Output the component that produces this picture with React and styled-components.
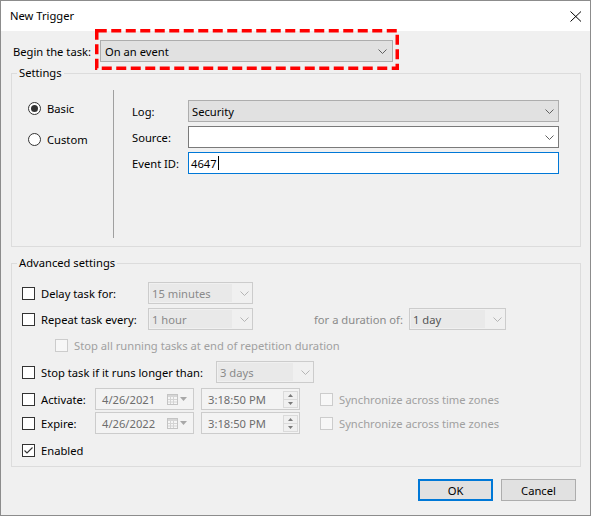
import styled, { createGlobalStyle } from "styled-components";

const GlobalStyle = createGlobalStyle`
  * { box-sizing: border-box; }
  html, body { margin: 0; padding: 0; background: #ffffff; }
  body {
    font-family: "Noto Sans", "Segoe UI", "Open Sans", sans-serif;
    font-size: 11.2px;
    color: #000;
  }
`;

const palette = {
  button: { bg: "#e1e1e1", border: "#adadad" },
  edit: { bg: "#ffffff", border: "#7a7a7a" },
  focus: { bg: "#ffffff", border: "#0078d7" },
  disabled: { bg: "#f0f0f0", border: "#cccccc" },
};

const Window = styled.div`
  width: 591px;
  height: 516px;
  border: 1px solid #8c8c8c;
  background: #f0f0f0;
  display: flex;
  flex-direction: column;
`;

const TitleBar = styled.div`
  height: 30px;
  flex: none;
  background: #fff;
  display: flex;
  align-items: center;
  justify-content: space-between;
  padding: 0 8px 0 9px;
`;

const Title = styled.span`
  line-height: 16px;
`;

const Body = styled.div`
  flex: 1;
  display: flex;
  flex-direction: column;
  padding: 9px 9px 0 10px;
`;

const BeginRow = styled.div`
  display: flex;
  align-items: center;
  height: 22px;
`;

const FieldLabel = styled.span`
  width: ${({ $w }) => $w}px;
  padding-left: ${({ $pl = 0 }) => $pl}px;
  flex: none;
  line-height: 16px;
  padding-top: 1px;
`;

const ComboWrap = styled.div`
  position: relative;
`;

const ComboBox = styled.div`
  width: ${({ $w }) => $w}px;
  height: 22px;
  flex: none;
  display: flex;
  align-items: center;
  background: ${({ $variant }) => palette[$variant].bg};
  border: ${({ $variant }) => ($variant === "focus" ? "1px" : "1px")} solid
    ${({ $variant }) => palette[$variant].border};
  margin-left: ${({ $ml = 0 }) => $ml}px;
`;

const ComboText = styled.span`
  flex: 1;
  align-self: stretch;
  display: flex;
  align-items: center;
  padding-left: ${({ $pl = 3 }) => $pl}px;
  margin: ${({ $disabled }) => ($disabled ? "1px 8px 1px 1px" : "0")};
  background: ${({ $disabled }) => ($disabled ? "#e9e9e9" : "transparent")};
  color: ${({ $disabled, $dark }) =>
    $dark ? "#555" : $disabled ? "#8a8a8a" : "#000"};
  white-space: nowrap;
`;

const Caret = styled.span`
  display: inline-block;
  width: 1px;
  height: 14px;
  background: #000;
  margin-left: 1px;
`;

const ChevronSvg = styled.svg`
  flex: none;
  margin-right: ${({ $mr = 5 }) => $mr}px;
`;

const Chevron = ({ color = "#606060", mr }) => (
  <ChevronSvg $mr={mr} width="9" height="5" viewBox="0 0 9 5">
    <path d="M0.5 0.5 L4.5 4.5 L8.5 0.5" fill="none" stroke={color} strokeWidth="1" />
  </ChevronSvg>
);

const HighlightSvg = styled.svg`
  position: absolute;
  left: -5px;
  top: -11px;
  pointer-events: none;
`;

const Highlight = () => (
  <HighlightSvg width="305" height="42" viewBox="0 0 305 42">
    <rect
      x="1.75"
      y="1.75"
      width="300.5"
      height="37.5"
      fill="none"
      stroke="#ff0000"
      strokeWidth="3.5"
      strokeDasharray="10 4.5"
    />
  </HighlightSvg>
);

const Group = styled.fieldset`
  margin: ${({ $mt }) => $mt}px 0 0 0;
  padding: 0;
  min-width: 0;
  border: 1px solid #dcdcdc;
`;

const Legend = styled.legend`
  margin-left: 5px;
  padding: 0 2px;
  line-height: 16px;
`;

const SettingsInner = styled.div`
  display: flex;
  height: 165px;
  padding: 9px 0 8px 0;
`;

const RadioColumn = styled.div`
  width: 101px;
  flex: none;
  display: flex;
  flex-direction: column;
  gap: 15px;
  padding: 10px 0 0 16px;
`;

const RadioRow = styled.label`
  display: flex;
  align-items: center;
  gap: 6px;
  height: 16px;
`;

const RadioCircle = styled.span`
  width: 13px;
  height: 13px;
  flex: none;
  border: 1px solid #333;
  border-radius: 50%;
  background: #fff;
  display: flex;
  align-items: center;
  justify-content: center;

  &::after {
    content: "";
    width: 7px;
    height: 7px;
    border-radius: 50%;
    background: ${({ $checked }) => ($checked ? "#333" : "transparent")};
  }
`;

const Separator = styled.div`
  width: 1px;
  flex: none;
  background: #a0a0a0;
`;

const FieldGrid = styled.div`
  display: grid;
  grid-template-columns: 56px 371px;
  grid-auto-rows: 22px;
  row-gap: 4px;
  align-items: center;
  padding: 10px 0 0 18px;
  align-content: start;
`;

const AdvancedInner = styled.div`
  display: flex;
  flex-direction: column;
  padding: 0 0 5px 10px;
`;

const Row = styled.div`
  display: flex;
  align-items: center;
  height: 22px;
  margin-top: ${({ $mt = 0 }) => $mt}px;
  padding-left: ${({ $pl = 0 }) => $pl}px;
`;

const CheckField = styled.label`
  width: ${({ $w }) => ($w ? `${$w}px` : "auto")};
  flex: none;
  display: flex;
  align-items: center;
  gap: 6px;
  margin-left: ${({ $ml = 0 }) => $ml}px;
  color: ${({ $disabled }) => ($disabled ? "#a0a0a0" : "#000")};
  white-space: nowrap;
`;

const Box = styled.span`
  width: 13px;
  height: 13px;
  flex: none;
  border: 1px solid ${({ $disabled }) => ($disabled ? "#cccccc" : "#333333")};
  background: ${({ $disabled }) => ($disabled ? "#f7f7f7" : "#ffffff")};
  display: flex;
  align-items: center;
  justify-content: center;
`;

const CheckBox = ({ checked, disabled }) => (
  <Box $disabled={disabled}>
    {checked && (
      <svg width="11" height="11" viewBox="0 0 11 11">
        <path d="M1.5 5.5 L4 8 L9.5 2.5" fill="none" stroke="#333" strokeWidth="1.1" />
      </svg>
    )}
  </Box>
);

const MutedLabel = styled.span`
  width: ${({ $w }) => $w}px;
  flex: none;
  margin-left: ${({ $ml = 0 }) => $ml}px;
  color: #8a8a8a;
  white-space: nowrap;
`;

const PickerBox = styled.div`
  width: 99px;
  height: 22px;
  flex: none;
  display: flex;
  align-items: center;
  border: 1px solid #cccccc;
  background: #f3f3f3;
  margin-left: ${({ $ml = 0 }) => $ml}px;
  padding-left: 6px;
  color: #6d6d6d;
`;

const PickerText = styled.span`
  flex: 1;
  white-space: nowrap;
`;

const PickerIcons = styled.span`
  display: flex;
  align-items: center;
  gap: 2px;
  margin-right: 6px;
`;

const CalendarIcon = () => (
  <svg width="11" height="11" viewBox="0 0 11 11">
    <rect x="0.5" y="0.5" width="10" height="10" fill="#f6f6f6" stroke="#c4c4c4" />
    <rect x="1" y="1" width="9" height="2" fill="#d6d6d6" />
    <path d="M3.5 3 V10 M6.5 3 V10 M1 5.5 H10 M1 8 H10" stroke="#d4d4d4" strokeWidth="1" />
  </svg>
);

const DropTriangle = () => (
  <svg width="7" height="4" viewBox="0 0 7 4">
    <polygon points="0,0 7,0 3.5,4" fill="#a8a8a8" />
  </svg>
);

const Spinner = styled.span`
  display: flex;
  flex-direction: column;
  width: 15px;
  height: 17px;
  margin-right: 1px;
  border: 1px solid #dadada;
`;

const SpinButton = styled.span`
  flex: 1;
  display: flex;
  align-items: center;
  justify-content: center;
  background: #f0f0f0;
  & + & {
    border-top: 1px solid #dadada;
  }
`;

const SpinArrow = ({ up }) => (
  <svg width="5" height="3" viewBox="0 0 5 3">
    <polygon points={up ? "0,3 5,3 2.5,0" : "0,0 5,0 2.5,3"} fill="#7a7a7a" />
  </svg>
);

const Footer = styled.div`
  display: flex;
  justify-content: flex-end;
  gap: 8px;
  margin-top: 12px;
  padding-right: 5px;
`;

const Button = styled.button`
  width: 75px;
  height: 22px;
  font: inherit;
  color: #000;
  background: #e1e1e1;
  border: ${({ $default }) => ($default ? "2px solid #0078d7" : "1px solid #adadad")};
  padding: 0;
`;

const CloseIcon = () => (
  <svg width="12" height="11" viewBox="0 0 12 11">
    <path d="M0.5 0.5 L11 10.5 M11 0.5 L0.5 10.5" stroke="#000" strokeWidth="1" />
  </svg>
);

const DisabledCombo = ({ w, ml, text, dark }) => (
  <ComboBox $variant="disabled" $w={w} $ml={ml}>
    <ComboText $disabled $dark={dark} $pl={2}>
      {text}
    </ComboText>
    <Chevron color="#b5b5b5" mr={3} />
  </ComboBox>
);

const DateTimeRow = ({ label, date, mt }) => (
  <Row $mt={mt}>
    <CheckField $w={73}>
      <CheckBox />
      {label}
    </CheckField>
    <PickerBox>
      <PickerText>{date}</PickerText>
      <PickerIcons>
        <CalendarIcon />
        <DropTriangle />
      </PickerIcons>
    </PickerBox>
    <PickerBox $ml={7}>
      <PickerText>3:18:50 PM</PickerText>
      <Spinner>
        <SpinButton>
          <SpinArrow up />
        </SpinButton>
        <SpinButton>
          <SpinArrow />
        </SpinButton>
      </Spinner>
    </PickerBox>
    <CheckField $ml={20} $disabled>
      <CheckBox disabled />
      Synchronize across time zones
    </CheckField>
  </Row>
);

export default function App() {
  return (
    <>
      <GlobalStyle />
      <Window>
        <TitleBar>
          <Title>New Trigger</Title>
          <CloseIcon />
        </TitleBar>
        <Body>
          <BeginRow>
            <FieldLabel $w={89} $pl={2}>
              Begin the task:
            </FieldLabel>
            <ComboWrap>
              <ComboBox $variant="button" $w={293}>
                <ComboText $pl={4}>On an event</ComboText>
                <Chevron mr={5} />
              </ComboBox>
              <Highlight />
            </ComboWrap>
          </BeginRow>

          <Group $mt={3}>
            <Legend>Settings</Legend>
            <SettingsInner>
              <RadioColumn>
                <RadioRow>
                  <RadioCircle $checked />
                  Basic
                </RadioRow>
                <RadioRow>
                  <RadioCircle />
                  Custom
                </RadioRow>
              </RadioColumn>
              <Separator />
              <FieldGrid>
                <FieldLabel>Log:</FieldLabel>
                <ComboBox $variant="button" $w={371}>
                  <ComboText $pl={3}>Security</ComboText>
                  <Chevron mr={4} />
                </ComboBox>
                <FieldLabel>Source:</FieldLabel>
                <ComboBox $variant="edit" $w={371}>
                  <ComboText />
                  <Chevron mr={4} />
                </ComboBox>
                <FieldLabel>Event ID:</FieldLabel>
                <ComboBox $variant="focus" $w={371}>
                  <ComboText $pl={2}>
                    4647
                    <Caret />
                  </ComboText>
                </ComboBox>
              </FieldGrid>
            </SettingsInner>
          </Group>

          <Group $mt={8}>
            <Legend>Advanced settings</Legend>
            <AdvancedInner>
              <Row $mt={11}>
                <CheckField $w={126}>
                  <CheckBox />
                  Delay task for:
                </CheckField>
                <DisabledCombo w={105} text="15 minutes" />
              </Row>
              <Row $mt={4}>
                <CheckField $w={126}>
                  <CheckBox />
                  Repeat task every:
                </CheckField>
                <DisabledCombo w={105} text="1 hour" />
                <MutedLabel $w={95} $ml={61}>
                  for a duration of:
                </MutedLabel>
                <DisabledCombo w={97} text="1 day" dark />
              </Row>
              <Row $mt={4} $pl={33}>
                <CheckField $disabled>
                  <CheckBox disabled />
                  Stop all running tasks at end of repetition duration
                </CheckField>
              </Row>
              <Row $mt={5}>
                <CheckField $w={194}>
                  <CheckBox />
                  Stop task if it runs longer than:
                </CheckField>
                <DisabledCombo w={98} text="3 days" />
              </Row>
              <DateTimeRow label="Activate:" date="4/26/2021" mt={5} />
              <DateTimeRow label="Expire:" date="4/26/2022" mt={2} />
              <Row $mt={5}>
                <CheckField>
                  <CheckBox checked />
                  Enabled
                </CheckField>
              </Row>
            </AdvancedInner>
          </Group>

          <Footer>
            <Button $default>OK</Button>
            <Button>Cancel</Button>
          </Footer>
        </Body>
      </Window>
    </>
  );
}
